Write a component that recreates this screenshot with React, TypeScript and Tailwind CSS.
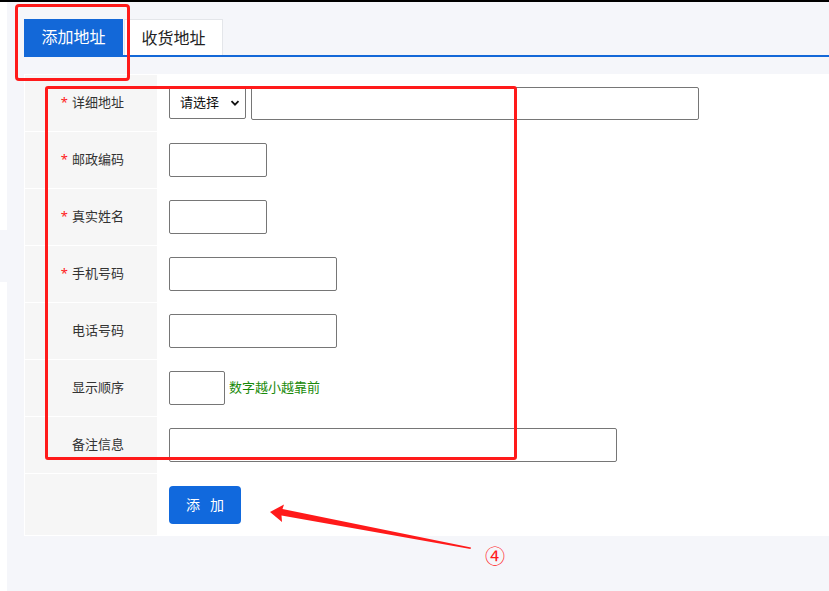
import React from "react";

type Row = {
  label: string;
  required?: boolean;
  field: React.ReactNode;
};

const inputCls =
  "block rounded-[2px] border border-[#767676] bg-white outline-none";

export default function App() {
  const rows: Row[] = [
    {
      label: "详细地址",
      required: true,
      field: (
        <div className="flex items-center gap-[5px]">
          <div className="flex h-[32px] w-[77px] items-center justify-between rounded-[2px] border border-[#767676] bg-white pl-[10px] pr-[5px] text-[13px] text-[#111]">
            <span>请选择</span>
            <svg width="10" height="10" viewBox="0 0 10 10">
              <path
                d="M1.5 3.2 L5 6.7 L8.5 3.2"
                fill="none"
                stroke="#111"
                strokeWidth="1.8"
              />
            </svg>
          </div>
          <input className={`${inputCls} h-[33px] w-[448px]`} />
        </div>
      ),
    },
    {
      label: "邮政编码",
      required: true,
      field: <input className={`${inputCls} h-[34px] w-[98px]`} />,
    },
    {
      label: "真实姓名",
      required: true,
      field: <input className={`${inputCls} h-[34px] w-[98px]`} />,
    },
    {
      label: "手机号码",
      required: true,
      field: <input className={`${inputCls} h-[34px] w-[168px]`} />,
    },
    {
      label: "电话号码",
      field: <input className={`${inputCls} h-[34px] w-[168px]`} />,
    },
    {
      label: "显示顺序",
      field: (
        <div className="flex items-center gap-[4px]">
          <input className={`${inputCls} h-[34px] w-[56px]`} />
          <span className="text-[13px] text-[#1a8a0a]">数字越小越靠前</span>
        </div>
      ),
    },
    {
      label: "备注信息",
      field: <input className={`${inputCls} h-[34px] w-[448px]`} />,
    },
  ];

  return (
    <div
      className="relative h-[591px] w-full overflow-hidden bg-white text-[#333]"
      style={{ fontFamily: '"Noto Sans", "Noto Sans CJK SC", sans-serif' }}
    >
      <div className="h-[2px] bg-black" />
      <div className="flex h-[589px]">
        <div className="flex w-[7px] flex-col">
          <div className="h-[228px]" />
          <div className="h-[52px] bg-[#f5f6fa]" />
        </div>
        <div className="flex-1 bg-[#f5f6fa] pl-[17px] pt-[17px]">
          {/* tabs */}
          <div className="flex gap-[1px] border-b-2 border-[#1368d8]">
            <div className="flex h-[36px] w-[99px] items-center justify-center bg-[#1368d8] text-[16px] text-white">
              添加地址
            </div>
            <div className="flex h-[36px] w-[99px] items-center justify-center border border-b-0 border-[#e4e6ea] bg-white text-[16px] text-[#222]">
              收货地址
            </div>
          </div>

          {/* form table */}
          <div className="mt-[17px] border border-white">
            {rows.map((r) => (
              <div key={r.label} className="flex border-b border-white">
                <div className="flex h-[56px] w-[132px] items-center justify-end bg-[#f6f6f6] pr-[33px] text-[13px]">
                  {r.required && (
                    <span className="mr-[4px] text-[#ff2020]">*</span>
                  )}
                  <span>{r.label}</span>
                </div>
                <div className="flex flex-1 items-center bg-white pl-[12px]">
                  {r.field}
                </div>
              </div>
            ))}
            <div className="flex">
              <div className="h-[61px] w-[132px] bg-[#f6f6f6]" />
              <div className="flex flex-1 items-center bg-white pl-[12px]">
                <button className="flex h-[38px] w-[72px] items-center justify-center gap-[10px] rounded-[4px] bg-[#1169dd] text-[14px] text-white">
                  <span>添</span>
                  <span>加</span>
                </button>
              </div>
            </div>
          </div>
        </div>
      </div>

      {/* annotations */}
      <div className="pointer-events-none absolute left-[15px] top-[4px] h-[77px] w-[115px] rounded-[4px] border-[3px] border-[#ff1a1a]" />
      <div className="pointer-events-none absolute left-[45px] top-[86px] h-[374px] w-[472px] rounded-[3px] border-[3px] border-[#ff1a1a]" />
      <svg
        className="pointer-events-none absolute left-0 top-0"
        width="829"
        height="591"
        viewBox="0 0 829 591"
      >
        <polygon
          points="270,512 284,504.5 282.5,509 471,547.5 470.5,549 281.5,515.5 282,522"
          fill="#ff1a1a"
        />
      </svg>
      <div className="pointer-events-none absolute left-[485px] top-[547px] text-[20px] leading-none text-[#ff1a1a]">
        ④
      </div>
    </div>
  );
}
